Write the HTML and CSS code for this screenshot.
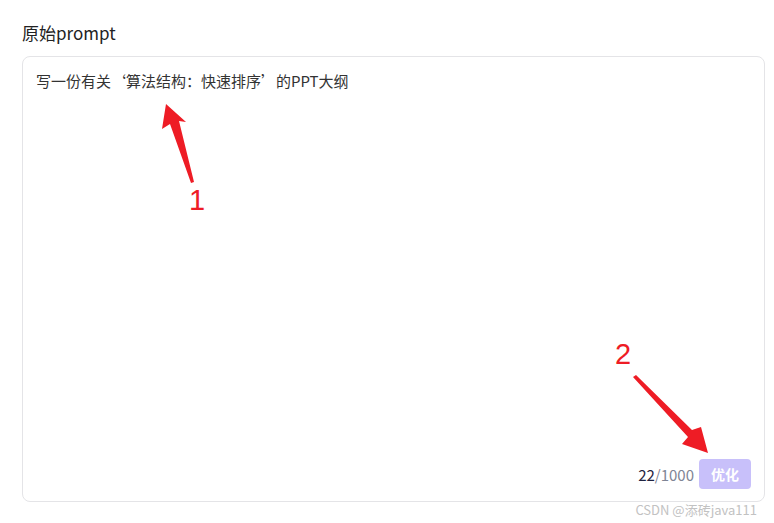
FILE: index.html
```html
<!DOCTYPE html>
<html lang="zh-CN">
<head>
<meta charset="utf-8">
<link rel="stylesheet" href="styles.css">
</head>
<body>
<div class="page">
  <h2 class="title">原始prompt</h2>
  <div class="box">
    <div class="content">写一份有关‘算法结构：快速排序’的PPT大纲</div>
    <div class="footer">
      <span class="count"><span class="cur">22</span>/1000</span>
      <button class="btn">优化</button>
    </div>
  </div>
  <div class="watermark">CSDN @添砖java111</div>
</div>
<svg class="annot" width="774" height="523" viewBox="0 0 774 523">
  <polygon points="166,104 186,122 179,121 194,182 191,183 170,124 162,129" fill="#ee1c25"/>
  <text x="189" y="210" font-size="29" fill="#ee1c25" font-family="Liberation Sans, sans-serif">1</text>
  <polygon points="633,377 636,375 692,430 701,427 708,453 682,444 688,437" fill="#ee1c25"/>
  <text x="615" y="364" font-size="29" fill="#ee1c25" font-family="Liberation Sans, sans-serif">2</text>
</svg>
</body>
</html>
```
FILE: styles.css
```css
html, body {
  margin: 0;
  padding: 0;
  background: #fff;
}
body {
  font-family: "Noto Sans CJK SC", "Noto Sans", sans-serif;
  width: 774px;
  height: 523px;
  overflow: hidden;
  position: relative;
}
.page {
  padding: 20px 9px 0 22px;
}
.title {
  margin: 0 0 11px 0;
  font-size: 17px;
  font-weight: 400;
  color: #222;
  line-height: 25px;
}
.box {
  height: 446px;
  border: 1px solid #e4e4e7;
  border-radius: 8px;
  box-sizing: border-box;
  display: flex;
  flex-direction: column;
  justify-content: space-between;
  padding: 12px 13px 12px 13px;
}
.content {
  font-size: 15px;
  color: #333;
  line-height: 24px;
}
.footer {
  display: flex;
  justify-content: flex-end;
  align-items: center;
  gap: 5px;
}
.count {
  font-size: 15px;
  color: #7f8595;
}
.cur {
  color: #1f2340;
}
.btn {
  width: 52px;
  height: 30px;
  border: none;
  border-radius: 4px;
  background: #c8c0fa;
  color: #fff;
  font-family: "Noto Sans CJK SC", sans-serif;
  font-size: 14px;
  font-weight: 700;
  padding: 0;
}
.watermark {
  text-align: right;
  padding-right: 8px;
  margin-top: 0px;
  font-size: 13px;
  color: #c2c2c2;
  line-height: 16px;
}
.annot {
  position: absolute;
  left: 0;
  top: 0;
  pointer-events: none;
}
```
